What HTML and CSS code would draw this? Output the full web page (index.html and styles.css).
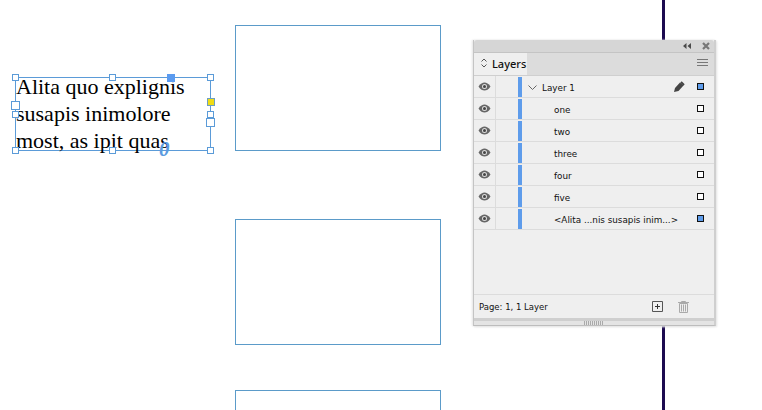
FILE: index.html
```html
<!DOCTYPE html>
<html lang="en">
<head>
<meta charset="utf-8">
<title>Layers</title>
<link rel="stylesheet" href="styles.css">
</head>
<body>
<main class="canvas">
  <div class="guide"></div>
  <div class="frame frame-a"></div>
  <div class="frame frame-b"></div>
  <div class="frame frame-c"></div>

  <div class="textframe">
    <p class="story">Alita quo explignis<br>susapis inimolore<br>most, as ipit quas</p>
  </div>
  <span class="h h-tl"></span><span class="h h-tc"></span><span class="h h-tr"></span>
  <span class="h h-ml"></span><span class="h h-mr"></span>
  <span class="h h-bl"></span><span class="h h-bc"></span><span class="h h-br"></span>
  <span class="proxy"></span>
  <span class="port port-in"></span><span class="port port-out"></span>
  <span class="corner"></span>
  <span class="overset">0</span>

  <section class="panel">
    <header class="titlebar">
      <svg class="collapse" width="8" height="6" viewBox="0 0 8 6"><path d="M3.500 0v6L0 3zM8 0v6L4.500 3z" fill="#4a4a4a"/></svg>
      <svg class="close" width="8" height="8" viewBox="0 0 8 8"><path d="M1 1l6 6M7 1L1 7" stroke="#777" stroke-width="2.200"/></svg>
    </header>
    <div class="tabbar">
      <div class="tab">
        <svg class="updown" width="6" height="10" viewBox="0 0 6 10"><path d="M.5 3.500L3 1l2.500 2.500M.5 6.500L3 9l2.500-2.500" fill="none" stroke="#555"/></svg>
        <span>Layers</span>
      </div>
      <svg class="menu" width="11" height="8" viewBox="0 0 11 8"><path d="M0 .5h11M0 3.500h11M0 6.500h11" stroke="#777"/></svg>
    </div>
    <div class="rows">
      <div class="row">
        <span class="eyecell"><svg class="eye" width="13" height="9" viewBox="0 0 13 9"><path d="M.5 4.500C2.500 1.500 4.500.5 6.500.5s4 1 6 4c-2 3-4 4-6 4s-4-1-6-4z" fill="#666"/><circle cx="6.500" cy="4.500" r="2.500" fill="#ddd"/><circle cx="6.500" cy="4.500" r="1.500" fill="#444"/></svg></span>
        <span class="lockcell"></span><span class="bar"></span>
        <span class="name name-top"><svg class="chev" width="9" height="5" viewBox="0 0 9 5"><path d="M.5.500l4 4 4-4" fill="none" stroke="#666"/></svg>Layer 1</span>
        <svg class="pen" width="12" height="12" viewBox="0 0 12 12"><path d="M1 11l1-4 5-5.500 3.500 3L5.500 10z" fill="#444"/><path d="M8 1l3 3" stroke="#444" stroke-width="2"/></svg>
        <span class="sq sq-on"></span>
      </div>
      <div class="row"><span class="eyecell"><svg class="eye" width="13" height="9" viewBox="0 0 13 9"><path d="M.5 4.500C2.500 1.500 4.500.5 6.500.5s4 1 6 4c-2 3-4 4-6 4s-4-1-6-4z" fill="#666"/><circle cx="6.500" cy="4.500" r="2.500" fill="#ddd"/><circle cx="6.500" cy="4.500" r="1.500" fill="#444"/></svg></span><span class="lockcell"></span><span class="bar"></span><span class="name">one</span><span class="sq"></span></div>
      <div class="row"><span class="eyecell"><svg class="eye" width="13" height="9" viewBox="0 0 13 9"><path d="M.5 4.500C2.500 1.500 4.500.5 6.500.5s4 1 6 4c-2 3-4 4-6 4s-4-1-6-4z" fill="#666"/><circle cx="6.500" cy="4.500" r="2.500" fill="#ddd"/><circle cx="6.500" cy="4.500" r="1.500" fill="#444"/></svg></span><span class="lockcell"></span><span class="bar"></span><span class="name">two</span><span class="sq"></span></div>
      <div class="row"><span class="eyecell"><svg class="eye" width="13" height="9" viewBox="0 0 13 9"><path d="M.5 4.500C2.500 1.500 4.500.5 6.500.5s4 1 6 4c-2 3-4 4-6 4s-4-1-6-4z" fill="#666"/><circle cx="6.500" cy="4.500" r="2.500" fill="#ddd"/><circle cx="6.500" cy="4.500" r="1.500" fill="#444"/></svg></span><span class="lockcell"></span><span class="bar"></span><span class="name">three</span><span class="sq"></span></div>
      <div class="row"><span class="eyecell"><svg class="eye" width="13" height="9" viewBox="0 0 13 9"><path d="M.5 4.500C2.500 1.500 4.500.5 6.500.5s4 1 6 4c-2 3-4 4-6 4s-4-1-6-4z" fill="#666"/><circle cx="6.500" cy="4.500" r="2.500" fill="#ddd"/><circle cx="6.500" cy="4.500" r="1.500" fill="#444"/></svg></span><span class="lockcell"></span><span class="bar"></span><span class="name">four</span><span class="sq"></span></div>
      <div class="row"><span class="eyecell"><svg class="eye" width="13" height="9" viewBox="0 0 13 9"><path d="M.5 4.500C2.500 1.500 4.500.5 6.500.5s4 1 6 4c-2 3-4 4-6 4s-4-1-6-4z" fill="#666"/><circle cx="6.500" cy="4.500" r="2.500" fill="#ddd"/><circle cx="6.500" cy="4.500" r="1.500" fill="#444"/></svg></span><span class="lockcell"></span><span class="bar"></span><span class="name">five</span><span class="sq"></span></div>
      <div class="row"><span class="eyecell"><svg class="eye" width="13" height="9" viewBox="0 0 13 9"><path d="M.5 4.500C2.500 1.500 4.500.5 6.500.5s4 1 6 4c-2 3-4 4-6 4s-4-1-6-4z" fill="#666"/><circle cx="6.500" cy="4.500" r="2.500" fill="#ddd"/><circle cx="6.500" cy="4.500" r="1.500" fill="#444"/></svg></span><span class="lockcell"></span><span class="bar"></span><span class="name">&lt;Alita ...nis susapis inim...&gt;</span><span class="sq sq-on"></span></div>
    </div>
    <footer class="status">
      <span>Page: 1, 1 Layer</span>
      <svg class="add" width="11" height="11" viewBox="0 0 11 11"><path d="M.5.500h10v10H.5z" fill="none" stroke="#555"/><path d="M5.500 3v5M3 5.500h5" stroke="#333"/></svg>
      <svg class="trash" width="11" height="12" viewBox="0 0 11 12"><path d="M0 1.500h11M3.500 1.500V.5h4v1M1.500 2.500h8V11.500h-8zM3.500 3.500v7M5.500 3.500v7M7.500 3.500v7" fill="none" stroke="#aaa"/></svg>
    </footer>
    <div class="grip"><span class="dots"></span></div>
  </section>
</main>
</body>
</html>
```
FILE: styles.css
```css
* { box-sizing: border-box; }
html, body { margin: 0; padding: 0; background: #fff; overflow: hidden; }
.canvas { position: relative; width: 762px; height: 410px; overflow: hidden; font-family: "DejaVu Sans", sans-serif; }

.guide { position: absolute; left: 662px; top: 0; width: 3px; height: 410px; background: #1c0a50; }
.frame { position: absolute; left: 235px; width: 206px; height: 126px; border: 1px solid #5b9bc9; background: #fff; }
.frame-a { top: 25px; }
.frame-b { top: 219px; }
.frame-c { top: 390px; }

.textframe { position: absolute; left: 15px; top: 77px; width: 196px; height: 74px; border: 1px solid #5b9bd8; }
.story { margin: -5px 0 0 0; font-family: "Liberation Serif", serif; font-size: 22px; line-height: 27px; color: #000; white-space: nowrap; }

.h { position: absolute; width: 7px; height: 7px; background: #fff; border: 1px solid #5b9bd8; }
.h-tl { left: 12px; top: 74px; }
.h-tc { left: 109px; top: 74px; }
.h-tr { left: 207px; top: 74px; }
.h-ml { left: 12px; top: 111px; }
.h-mr { left: 207px; top: 111px; }
.h-bl { left: 12px; top: 147px; }
.h-bc { left: 109px; top: 147px; }
.h-br { left: 207px; top: 147px; }
.proxy { position: absolute; left: 167px; top: 74px; width: 8px; height: 8px; background: #5b9bf0; }
.port { position: absolute; width: 9px; height: 9px; background: #fff; border: 1px solid #5b9bd8; }
.port-in { left: 11px; top: 101px; }
.port-out { left: 206px; top: 118px; }
.corner { position: absolute; left: 207px; top: 98px; width: 8px; height: 8px; background: #f0dc14; border: 1px solid #6d9fc0; }
.overset { position: absolute; left: 159px; top: 138px; font-family: "Liberation Serif", serif; font-style: italic; font-weight: bold; font-size: 21px; line-height: 22px; color: #5b9be0; }

.panel { position: absolute; left: 473px; top: 40px; width: 243px; height: 286px; display: flex; flex-direction: column; background: #efefef; border-right: 2px solid #cfcfcf; border-bottom: 1px solid #bdbdbd; border-left: 1px solid #c4c4c4; box-shadow: -1px 0 2px #e4e4e4, 1px 1px 2px #e4e4e4; color: #111; font-size: 9px; }
.titlebar { height: 13px; flex: none; display: flex; align-items: center; justify-content: flex-end; gap: 10px; padding-right: 4px; background: #d6d6d6; border-bottom: 1px solid #c4c4c4; border-radius: 3px 3px 0 0; }
.collapse { margin-right: 1px; }
.tabbar { height: 23px; flex: none; display: flex; justify-content: space-between; align-items: center; padding-right: 6px; background: #dcdcdc; border-bottom: 1px solid #cfcfcf; }
.tab { align-self: stretch; width: 53px; display: flex; align-items: center; gap: 5px; padding: 0 0 2px 7px; background: #efefef; font-size: 10px; }
.tab span { font-family: "Noto Sans", sans-serif; font-size: 11px; font-weight: 500; }
.menu { margin-bottom: 2px; }
.rows { flex: 1; display: flex; flex-direction: column; }
.row { height: 22px; flex: none; display: flex; align-items: center; border-bottom: 1px solid #dcdcdc; }
.eyecell { width: 22px; align-self: stretch; display: flex; align-items: center; justify-content: center; border-right: 1px solid #dcdcdc; }
.lockcell { width: 21px; align-self: stretch; }
.bar { width: 4px; height: 20px; margin-left: 1px; background: #5e9ceb; }
.name { flex: 1; padding: 2px 0 0 32px; font-size: 8.800px; white-space: nowrap; }
.name-top { padding-left: 6px; display: flex; align-items: center; gap: 5px; }
.pen { margin-right: 12px; }
.sq { width: 7px; height: 7px; margin-right: 10px; background: #fff; border: 1px solid #111; }
.sq-on { background: #5e9ceb; }
.status { height: 24px; flex: none; display: flex; align-items: center; padding-left: 5px; border-top: 1px solid #dcdcdc; font-size: 8.500px; }
.status span { flex: 1; }
.add { margin-right: 15px; }
.trash { margin-right: 25px; }
.grip { height: 7px; flex: none; display: flex; align-items: center; justify-content: center; background: #e4e4e4; border-top: 3px solid #cfcfcf; }
.dots { width: 20px; height: 4px; background: repeating-linear-gradient(90deg, #aaa 0 1px, transparent 1px 2px); }
```
